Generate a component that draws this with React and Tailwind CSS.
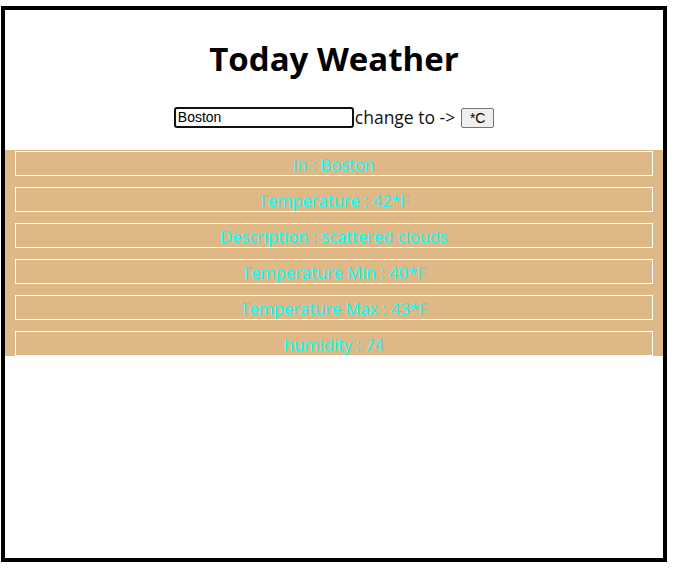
export default function App() {
  const rows = [
    "In : Boston",
    "Temperature : 42*F",
    "Description : scattered clouds",
    "Temperature Min : 40*F",
    "Temperature Max : 43*F",
    "humidity : 74",
  ];
  return (
    <div className="bg-white w-[674px] h-[578px] pt-[6px] pl-[1px]">
      <div className="w-[666px] h-[556px] border-4 border-black font-['Open_Sans',sans-serif]">
        <h1 className="text-[33px] font-bold text-center leading-[44px] mt-[27px] text-black">
          Today Weather
        </h1>
        <div className="flex justify-center items-center mt-[26px] h-[21px]">
          <input
            defaultValue="Boston"
            className="w-[180px] h-[21px] border-2 border-[#111] rounded-[3px] px-[2px] text-[14px] font-['Liberation_Sans',sans-serif] text-black outline-none"
          />
          <span className="text-[17.5px] text-[#111] ml-[1px] leading-[21px]">change to -&gt;</span>
          <button className="ml-[6px] w-[33px] h-[20px] bg-[#efefef] border border-[#767676] rounded-[2px] text-[14px] font-['Liberation_Sans',sans-serif] text-black leading-none">
            *C
          </button>
        </div>
        <div className="bg-[#deb887] mt-[22px] pt-px flex flex-col gap-[11px]">
          {rows.map((r) => (
            <div
              key={r}
              className="mx-[10px] h-[25px] border border-white text-center text-[#00ffff] text-[16.5px] leading-[25px]"
            >
              {r}
            </div>
          ))}
        </div>
      </div>
    </div>
  );
}
